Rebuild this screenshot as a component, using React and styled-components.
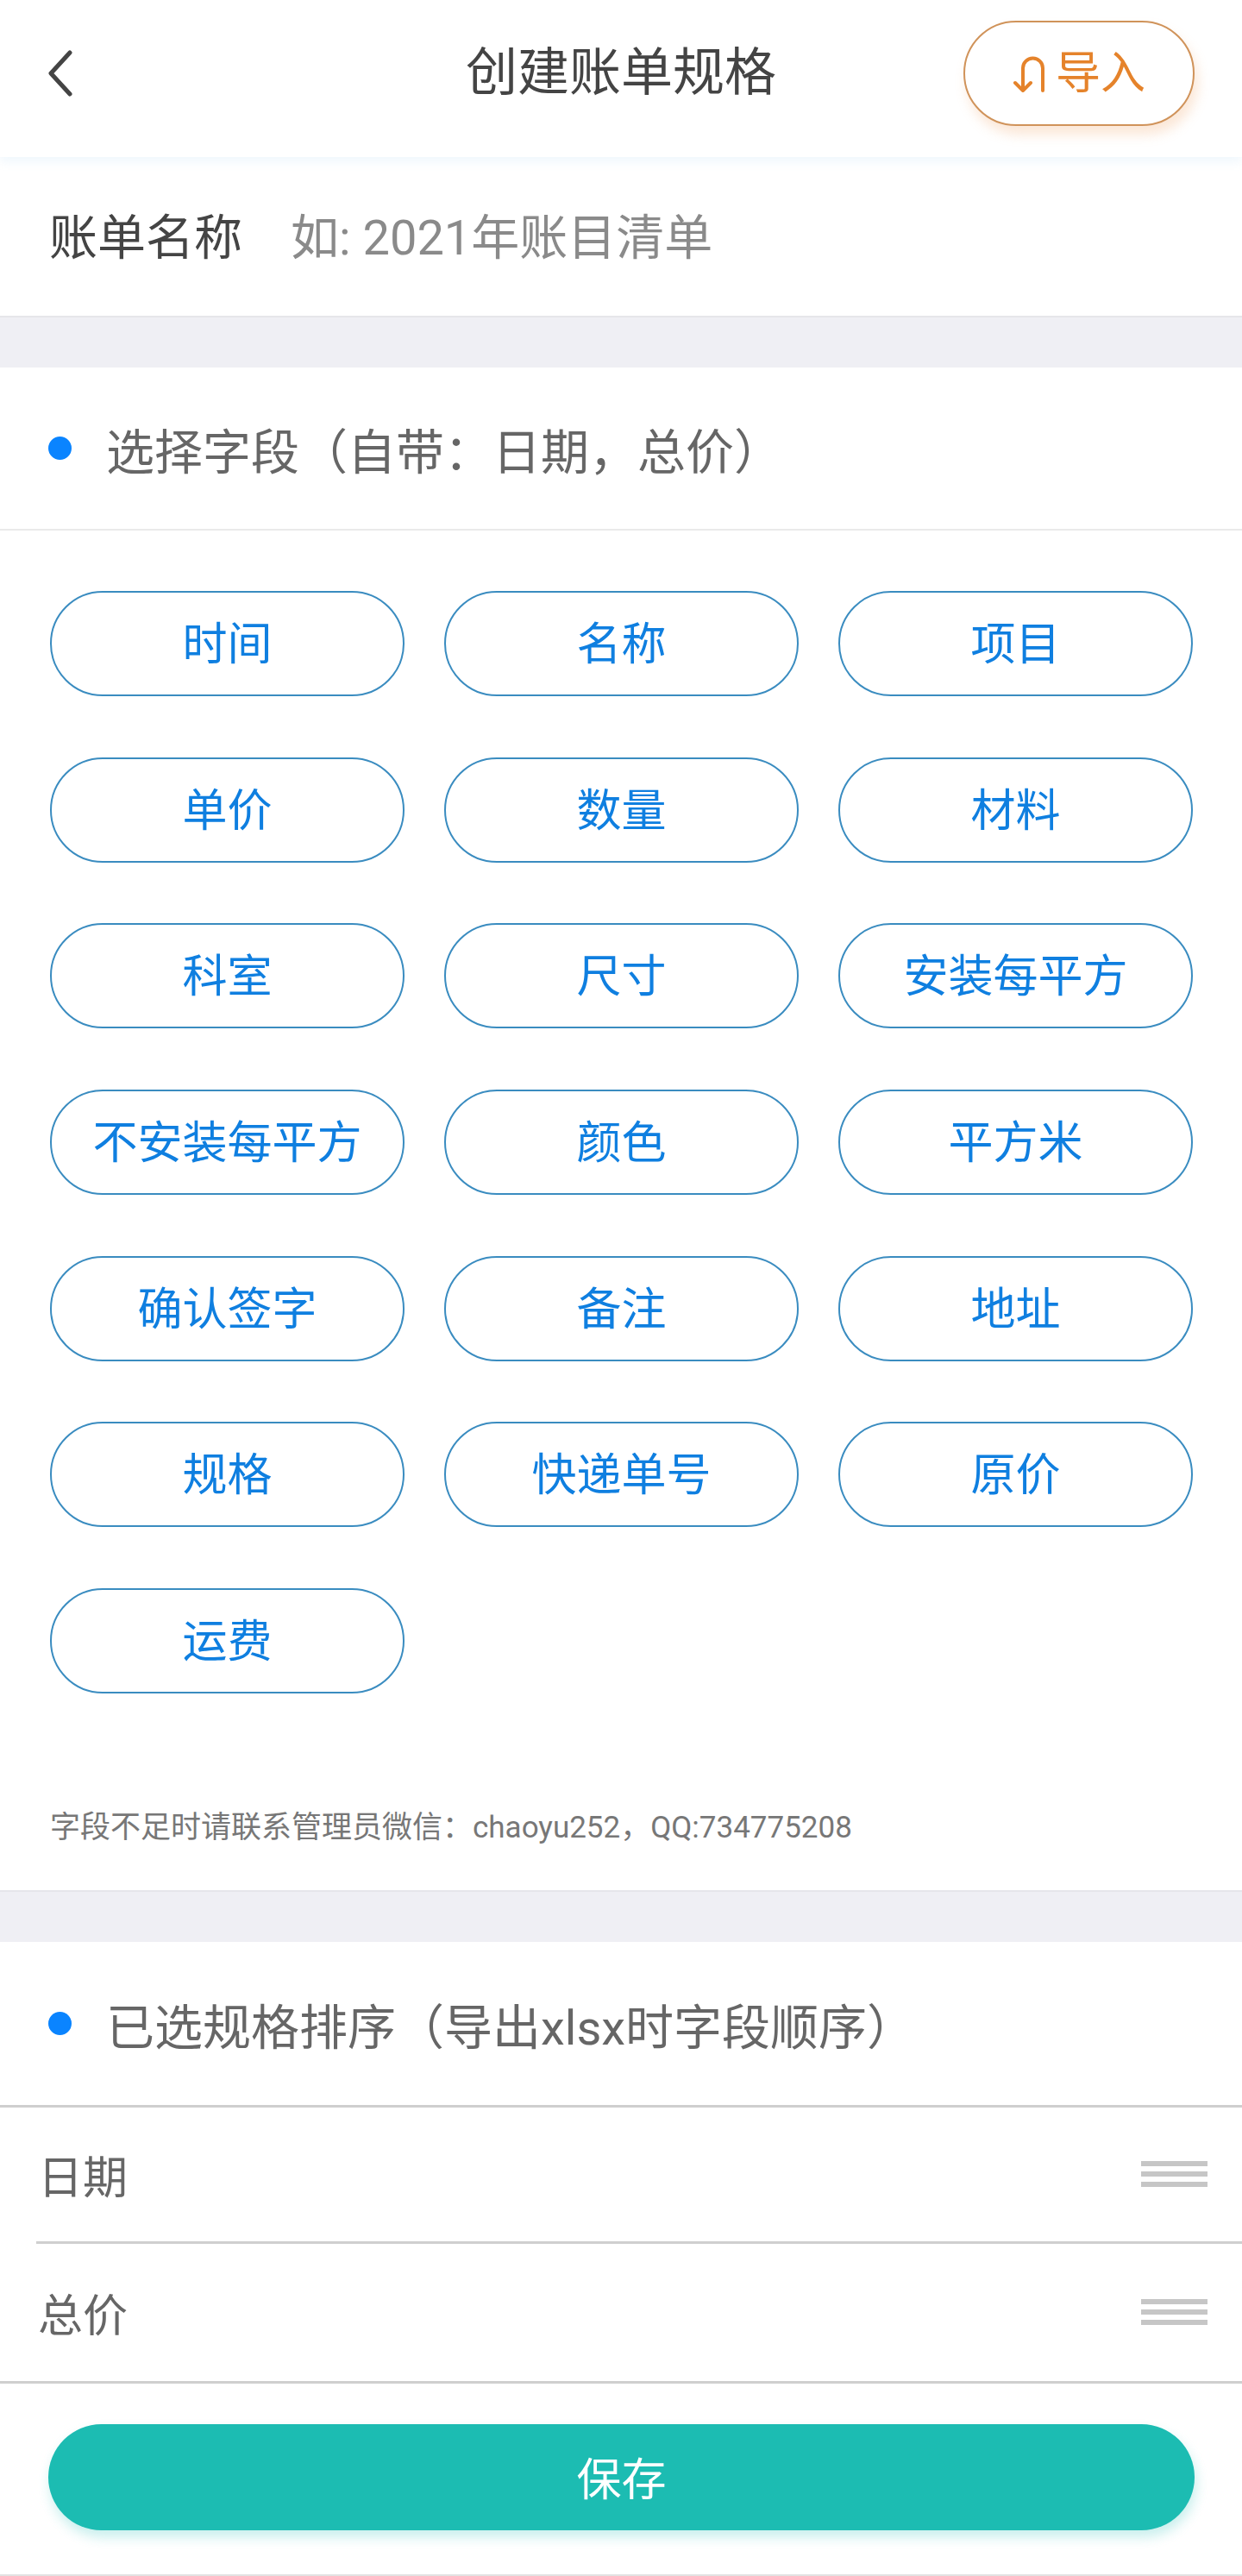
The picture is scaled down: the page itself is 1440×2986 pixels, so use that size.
import React from "react";
import styled, { createGlobalStyle } from "styled-components";

const GlobalStyle = createGlobalStyle`
  html, body {
    margin: 0;
    padding: 0;
    background: #fff;
    font-family: Roboto, "Noto Sans CJK SC", "Noto Sans", sans-serif;
  }
  * {
    box-sizing: border-box;
  }
`;

const Page = styled.div`
  width: 1440px;
  height: 2986px;
  overflow: hidden;
  background: #fff;
`;

const Header = styled.header`
  height: 182px;
  padding: 24px 55px 36px 55px;
  display: grid;
  grid-template-columns: 1fr auto 1fr;
  align-items: center;
  background: #fff;
  box-shadow: 0 6px 10px rgba(170, 210, 240, 0.16);
  position: relative;
`;

const BackIcon = styled.svg`
  width: 30px;
  height: 54px;
  display: block;
  margin-top: -1px;
`;

const Title = styled.h1`
  margin: 0;
  font-size: 60px;
  line-height: 70px;
  font-weight: 400;
  color: #444;
`;

const ImportButton = styled.div`
  justify-self: end;
  width: 268px;
  height: 122px;
  padding-top: 2px;
  border: 2px solid #d0935a;
  border-radius: 61px;
  background: #fff;
  box-shadow: 4px 10px 14px rgba(240, 170, 110, 0.28);
  display: flex;
  align-items: center;
  justify-content: center;
  gap: 10px;
  color: #e5832b;
  font-size: 52px;
  line-height: 60px;
`;

const ImportIcon = styled.svg`
  width: 40px;
  height: 42px;
  display: block;
`;

const NameRow = styled.div`
  height: 186px;
  padding: 0 57px 7px;
  display: flex;
  align-items: center;
  gap: 56px;
  border-bottom: 2px solid #e6e6ea;
  background: #fff;
`;

const NameLabel = styled.span`
  font-size: 56px;
  color: #444;
`;

const NamePlaceholder = styled.span`
  font-size: 56px;
  color: #8a8a8a;
`;

const Gap = styled.div`
  height: 58px;
  background: #efeff4;
`;

const SectionHeading = styled.div`
  height: ${(p) => p.$height}px;
  padding-left: 56px;
  display: flex;
  align-items: center;
  gap: 40px;
  font-size: 56px;
  color: #666;
`;

const Dot = styled.span`
  width: 27px;
  height: 27px;
  border-radius: 50%;
  background: #0a84ff;
  flex: none;
`;

const FieldPanel = styled.div`
  border-top: 2px solid #eaeaea;
  border-bottom: 2px solid #e6e6ea;
  height: 1580px;
  padding: 70px 56px 0 58px;
`;

const ChipGrid = styled.div`
  display: grid;
  grid-template-columns: repeat(3, 411px);
  column-gap: 46px;
  row-gap: 70.7px;
`;

const Chip = styled.div`
  height: 122px;
  padding-bottom: 7px;
  border: 2px solid #3a8cc0;
  border-radius: 61px;
  display: flex;
  align-items: center;
  justify-content: center;
  font-size: 52px;
  color: #0f7fe0;
`;

const Note = styled.p`
  margin: 136px 0 0;
  font-size: 35px;
  line-height: 40px;
  color: #777;
`;

const SortList = styled.div`
  border-top: 3px solid #cfcfcf;
`;

const SortRow = styled.div`
  height: ${(p) => p.$height}px;
  margin-left: ${(p) => p.$inset}px;
  padding: 0 40px 0 ${(p) => 44 - p.$inset}px;
  display: flex;
  align-items: center;
  justify-content: space-between;
  font-size: 52px;
  color: #666;
  border-bottom: 3px solid #cfcfcf;
`;

const Handle = styled.div`
  width: 77px;
  display: flex;
  flex-direction: column;
  gap: 6px;
  margin-top: -2px;
`;

const HandleBar = styled.span`
  display: block;
  height: 6px;
  background: #c6c6c6;
`;

const SaveWrap = styled.div`
  padding: 47px 55px 0 56px;
`;

const SaveButton = styled.div`
  height: 123px;
  padding-bottom: 2px;
  border-radius: 62px;
  background: #1cbcb2;
  box-shadow: 2px 8px 14px rgba(28, 188, 178, 0.24);
  display: flex;
  align-items: center;
  justify-content: center;
  font-size: 52px;
  color: #fff;
`;

const BottomLine = styled.div`
  margin-top: 51px;
  height: 2px;
  background: #e2e2e2;
`;

const fields = [
  "时间", "名称", "项目",
  "单价", "数量", "材料",
  "科室", "尺寸", "安装每平方",
  "不安装每平方", "颜色", "平方米",
  "确认签字", "备注", "地址",
  "规格", "快递单号", "原价",
  "运费",
];

function DragHandle() {
  return (
    <Handle>
      <HandleBar />
      <HandleBar />
      <HandleBar />
    </Handle>
  );
}

export default function App() {
  return (
    <Page>
      <GlobalStyle />
      <Header>
        <BackIcon viewBox="0 0 30 54" fill="none">
          <path d="M26 3 L4 27 L26 51" stroke="#444" strokeWidth="5" strokeLinecap="round" strokeLinejoin="round" />
        </BackIcon>
        <Title>创建账单规格</Title>
        <ImportButton>
          <ImportIcon viewBox="0 0 40 42" fill="none">
            <path
              d="M35 40 V14 A11.5 11.5 0 0 0 12 14 V39 M3 31 L12 40 L21 31"
              stroke="#e5832b"
              strokeWidth="4"
              strokeLinecap="round"
              strokeLinejoin="round"
            />
          </ImportIcon>
          <span>导入</span>
        </ImportButton>
      </Header>

      <NameRow>
        <NameLabel>账单名称</NameLabel>
        <NamePlaceholder>如: 2021年账目清单</NamePlaceholder>
      </NameRow>
      <Gap />

      <SectionHeading $height={187}>
        <Dot />
        <span>选择字段（自带：日期，总价）</span>
      </SectionHeading>
      <FieldPanel>
        <ChipGrid>
          {fields.map((name) => (
            <Chip key={name}>{name}</Chip>
          ))}
        </ChipGrid>
        <Note>字段不足时请联系管理员微信：chaoyu252，QQ:734775208</Note>
      </FieldPanel>
      <Gap />

      <SectionHeading $height={189}>
        <Dot />
        <span>已选规格排序（导出xlsx时字段顺序）</span>
      </SectionHeading>
      <SortList>
        <SortRow $height={158} $inset={42}>
          <span>日期</span>
          <DragHandle />
        </SortRow>
        <SortRow $height={162} $inset={0}>
          <span>总价</span>
          <DragHandle />
        </SortRow>
      </SortList>

      <SaveWrap>
        <SaveButton>保存</SaveButton>
      </SaveWrap>
      <BottomLine />
    </Page>
  );
}
